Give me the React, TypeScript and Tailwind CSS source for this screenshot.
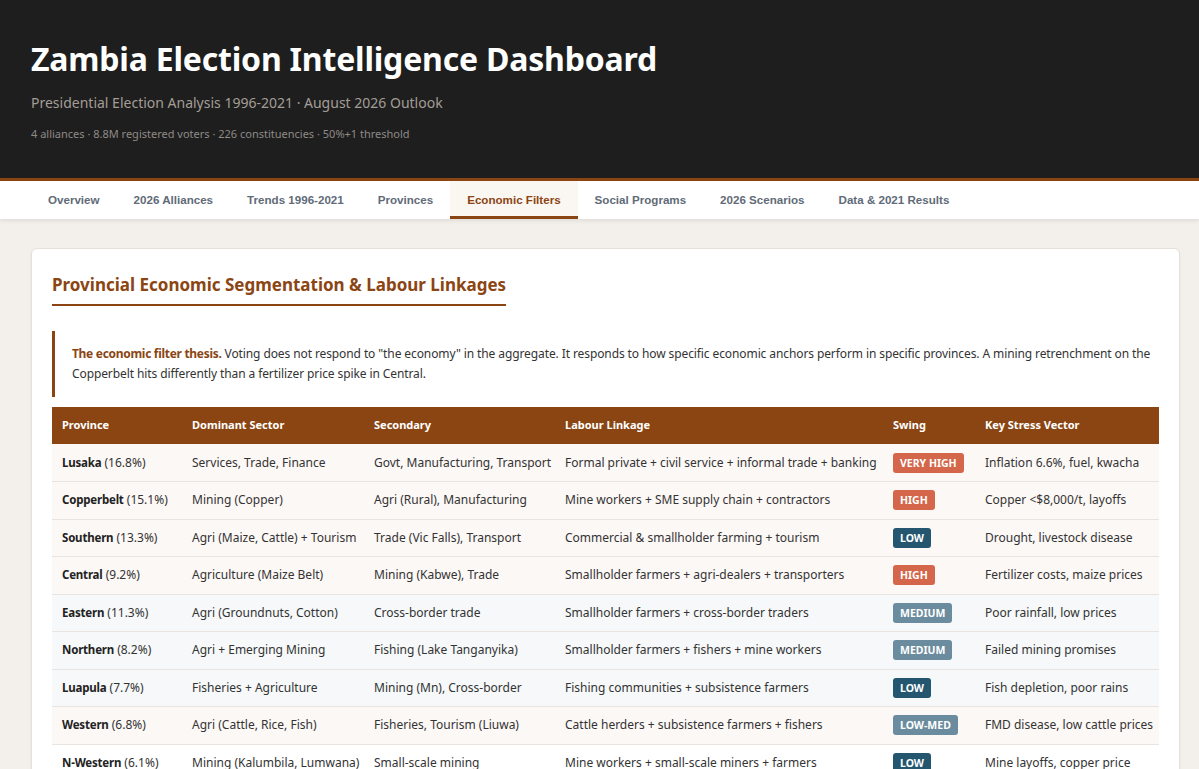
const tabs = [
  "Overview",
  "2026 Alliances",
  "Trends 1996-2021",
  "Provinces",
  "Economic Filters",
  "Social Programs",
  "2026 Scenarios",
  "Data & 2021 Results",
];

type Swing = "VERY HIGH" | "HIGH" | "MEDIUM" | "LOW-MED" | "LOW";

interface Row {
  province: string;
  share: string;
  dominant: string;
  secondary: string;
  labour: string;
  swing: Swing;
  stress: string;
  tone: "warm" | "cool" | "plain";
}

const rows: Row[] = [
  { province: "Lusaka", share: "(16.8%)", dominant: "Services, Trade, Finance", secondary: "Govt, Manufacturing, Transport", labour: "Formal private + civil service + informal trade + banking", swing: "VERY HIGH", stress: "Inflation 6.6%, fuel, kwacha", tone: "warm" },
  { province: "Copperbelt", share: "(15.1%)", dominant: "Mining (Copper)", secondary: "Agri (Rural), Manufacturing", labour: "Mine workers + SME supply chain + contractors", swing: "HIGH", stress: "Copper <$8,000/t, layoffs", tone: "warm" },
  { province: "Southern", share: "(13.3%)", dominant: "Agri (Maize, Cattle) + Tourism", secondary: "Trade (Vic Falls), Transport", labour: "Commercial & smallholder farming + tourism", swing: "LOW", stress: "Drought, livestock disease", tone: "warm" },
  { province: "Central", share: "(9.2%)", dominant: "Agriculture (Maize Belt)", secondary: "Mining (Kabwe), Trade", labour: "Smallholder farmers + agri-dealers + transporters", swing: "HIGH", stress: "Fertilizer costs, maize prices", tone: "warm" },
  { province: "Eastern", share: "(11.3%)", dominant: "Agri (Groundnuts, Cotton)", secondary: "Cross-border trade", labour: "Smallholder farmers + cross-border traders", swing: "MEDIUM", stress: "Poor rainfall, low prices", tone: "cool" },
  { province: "Northern", share: "(8.2%)", dominant: "Agri + Emerging Mining", secondary: "Fishing (Lake Tanganyika)", labour: "Smallholder farmers + fishers + mine workers", swing: "MEDIUM", stress: "Failed mining promises", tone: "cool" },
  { province: "Luapula", share: "(7.7%)", dominant: "Fisheries + Agriculture", secondary: "Mining (Mn), Cross-border", labour: "Fishing communities + subsistence farmers", swing: "LOW", stress: "Fish depletion, poor rains", tone: "cool" },
  { province: "Western", share: "(6.8%)", dominant: "Agri (Cattle, Rice, Fish)", secondary: "Fisheries, Tourism (Liuwa)", labour: "Cattle herders + subsistence farmers + fishers", swing: "LOW-MED", stress: "FMD disease, low cattle prices", tone: "warm" },
  { province: "N-Western", share: "(6.1%)", dominant: "Mining (Kalumbila, Lumwana)", secondary: "Small-scale mining", labour: "Mine workers + small-scale miners + farmers", swing: "LOW", stress: "Mine layoffs, copper price", tone: "plain" },
];

const badgeClass: Record<Swing, string> = {
  "VERY HIGH": "bg-[#d4674b]",
  HIGH: "bg-[#d4674b]",
  MEDIUM: "bg-[#6a8c9e]",
  "LOW-MED": "bg-[#6a8c9e]",
  LOW: "bg-[#24566f]",
};

const toneClass = {
  warm: "bg-[#fcf8f6]",
  cool: "bg-[#f6f8f9]",
  plain: "bg-white",
};

const body = { fontFamily: '"Noto Sans", "Open Sans", sans-serif' };

export default function App() {
  return (
    <div className="min-h-screen bg-[#f3efeb]" style={body}>
      <header className="bg-[#1e1e1e] border-b-[3px] border-[#8b4513] px-[31px] pt-[37px] h-[181px]">
        <h1 className="text-[32px] font-bold leading-[44px] text-white tracking-[-0.2px]">
          Zambia Election Intelligence Dashboard
        </h1>
        <p className="mt-[11px] text-[14px] leading-[22px] text-[#a39d96]">
          Presidential Election Analysis 1996-2021 · August 2026 Outlook
        </p>
        <p className="mt-[12px] text-[11px] leading-[16px] text-[#8e8a86]">
          4 alliances · 8.8M registered voters · 226 constituencies · 50%+1 threshold
        </p>
      </header>

      <nav
        className="flex h-[38px] bg-white pl-[31px] shadow-[0_2px_4px_rgba(0,0,0,0.08)]"
        style={{ fontFamily: '"Liberation Sans", Arial, sans-serif' }}
      >
        {tabs.map((t) => {
          const active = t === "Economic Filters";
          return (
            <div
              key={t}
              className={
                active
                  ? "flex items-center px-[17px] text-[11.6px] font-bold text-[#8b4513] bg-[#faf6f2] border-b-[3px] border-[#8b4513] pt-[3px]"
                  : "flex items-center px-[17px] text-[11.6px] font-bold text-[#5f6b78]"
              }
            >
              {t}
            </div>
          );
        })}
      </nav>

      <main className="pl-[31px] pr-[19px] pt-[29px]">
        <section className="rounded-[6px] border border-[#e6e0da] bg-white px-[20px] pt-[23px] pb-[24px] shadow-[0_1px_3px_rgba(0,0,0,0.05)]">
          <h2 className="inline-block border-b-2 border-[#8b4513] pb-[6px] text-[17px] font-bold leading-[26px] text-[#8b4513]">
            Provincial Economic Segmentation &amp; Labour Linkages
          </h2>

          <p className="mt-[25px] border-l-[3px] border-[#8b4513] py-[13px] pl-[17px] pr-[4px] text-[12px] leading-[20px] tracking-[-0.1px] text-[#333]">
            <strong className="font-bold tracking-[-0.3px] text-[#8b4513]">The economic filter thesis.</strong> Voting does
            not respond to "the economy" in the aggregate. It responds to how specific economic anchors perform in
            specific provinces. A mining retrenchment on the Copperbelt hits differently than a fertilizer price spike
            in Central.
          </p>

          <table className="mt-[10px] w-full table-fixed border-collapse text-[12px] text-[#333]">
            <colgroup>
              <col className="w-[130px]" />
              <col className="w-[182px]" />
              <col className="w-[191px]" />
              <col className="w-[328px]" />
              <col className="w-[92px]" />
              <col />
            </colgroup>
            <thead>
              <tr className="bg-[#8b4513] text-left text-white">
                {["Province", "Dominant Sector", "Secondary", "Labour Linkage", "Swing", "Key Stress Vector"].map((h) => (
                  <th key={h} className="h-[37px] px-[10px] text-[11px] font-bold whitespace-nowrap">
                    {h}
                  </th>
                ))}
              </tr>
            </thead>
            <tbody>
              {rows.map((r) => (
                <tr key={r.province} className={`${toneClass[r.tone]} border-b border-[#e9e4df]`}>
                  <td className="h-[37.5px] px-[10px] whitespace-nowrap">
                    <strong className="text-[11.5px] font-bold tracking-[-0.2px] text-[#222]">{r.province}</strong>{" "}
                    {r.share}
                  </td>
                  <td className="px-[10px] whitespace-nowrap">{r.dominant}</td>
                  <td className="px-[10px] whitespace-nowrap">{r.secondary}</td>
                  <td className="px-[10px] whitespace-nowrap">{r.labour}</td>
                  <td className="px-[10px] whitespace-nowrap">
                    <span
                      className={`${badgeClass[r.swing]} inline-block rounded-[3px] px-[7px] py-[3px] text-[10.5px] font-bold leading-[14px] text-white`}
                    >
                      {r.swing}
                    </span>
                  </td>
                  <td className="px-[10px] whitespace-nowrap">{r.stress}</td>
                </tr>
              ))}
            </tbody>
          </table>
        </section>
      </main>
    </div>
  );
}
